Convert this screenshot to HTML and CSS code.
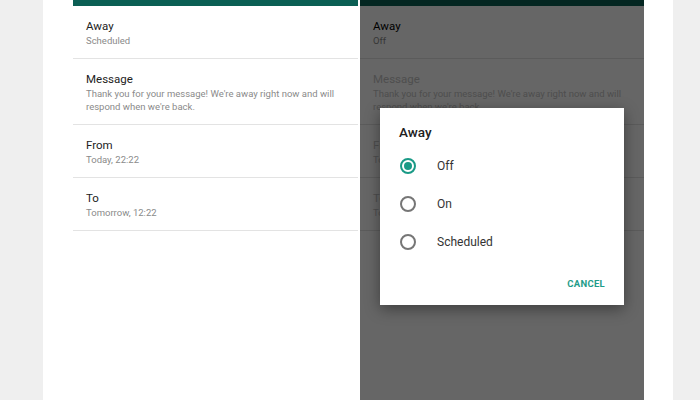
FILE: index.html
```html
<!DOCTYPE html>
<html lang="en">
<head>
    <meta charset="UTF-8">
    <meta name="viewport" content="width=device-width, initial-scale=1.0">
    <title>Away settings</title>
    <link rel="stylesheet" href="styles.css">
</head>
<body>

    <div class="panel">

        <!-- Left phone: settings list -->
        <div class="screen screen-left">
            <div class="appbar"></div>
            <div class="item">
                <div class="item-title">Away</div>
                <div class="item-sub">Scheduled</div>
            </div>
            <div class="item">
                <div class="item-title">Message</div>
                <div class="item-sub">Thank you for your message! We're away right now and will<br>respond when we're back.</div>
            </div>
            <div class="item">
                <div class="item-title">From</div>
                <div class="item-sub">Today, 22:22</div>
            </div>
            <div class="item">
                <div class="item-title">To</div>
                <div class="item-sub">Tomorrow, 12:22</div>
            </div>
        </div>

        <!-- Right phone: same list with dialog open -->
        <div class="screen screen-right">
            <div class="appbar"></div>
            <div class="item">
                <div class="item-title">Away</div>
                <div class="item-sub">Off</div>
            </div>
            <div class="item disabled">
                <div class="item-title">Message</div>
                <div class="item-sub">Thank you for your message! We're away right now and will<br>respond when we're back.</div>
            </div>
            <div class="item disabled">
                <div class="item-title">From</div>
                <div class="item-sub">Today, 22:22</div>
            </div>
            <div class="item disabled">
                <div class="item-title">To</div>
                <div class="item-sub">Tomorrow, 12:22</div>
            </div>

            <div class="scrim"></div>

            <div class="dialog">
                <div class="dialog-title">Away</div>
                <label class="radio-row"><span class="radio checked"></span> Off</label>
                <label class="radio-row"><span class="radio"></span> On</label>
                <label class="radio-row"><span class="radio"></span> Scheduled</label>
                <div class="dialog-actions">
                    <button class="text-btn">CANCEL</button>
                </div>
            </div>
        </div>

    </div>

</body>
</html>
```

FILE: styles.css
```css
body {
    font-family: Roboto, "Noto Sans", Arial, sans-serif;
    background-color: #efefef;
    margin: 0;
    height: 400px;
    overflow: hidden;
}
.panel {
    background: #ffffff;
    margin-left: 43px;
    width: 630px;
    box-sizing: border-box;
    height: 400px;
    padding-left: 30px;
    display: flex;
    gap: 2px;
}
.screen {
    height: 400px;
    position: relative;
    overflow: hidden;
    background: white;
    flex-shrink: 0;
}
.screen-left {
    width: 285px;
}
.screen-right {
    width: 284px;
}
.appbar {
    height: 6px;
    background: #0b5f54;
}
.item {
    padding: 13px 13px 11px 13px;
    border-bottom: 1px solid #e3e3e3;
}
.item-title {
    font-size: 11.5px;
    line-height: 14px;
    color: #222;
}
.item-sub {
    font-size: 9.5px;
    line-height: 13px;
    margin-top: 1px;
    color: #8a8a8a;
}
.screen-right .item-title {
    color: #000;
}
.disabled .item-title,
.disabled .item-sub,
.screen-right .disabled .item-title {
    color: #c4c4c4;
}
.scrim {
    position: absolute;
    top: 0;
    left: 0;
    right: 0;
    bottom: 0;
    background: rgba(0, 0, 0, 0.6);
}
.dialog {
    position: absolute;
    top: 108px;
    left: 20px;
    width: 244px;
    height: 197px;
    box-sizing: border-box;
    background: white;
    padding: 16px 19px 11px 19px;
    box-shadow: 0px 4px 14px rgba(0, 0, 0, 0.4);
}
.dialog-title {
    font-size: 13.5px;
    font-weight: 500;
    line-height: 16px;
    color: #212121;
    margin-bottom: 7px;
}
.radio-row {
    display: flex;
    align-items: center;
    height: 38px;
    font-size: 12px;
    color: #333;
    gap: 21px;
}
.radio {
    width: 16px;
    height: 16px;
    box-sizing: border-box;
    border: 2px solid #767676;
    border-radius: 50%;
    position: relative;
    margin-left: 1px;
}
.radio.checked {
    border-color: #1a9a86;
}
.radio.checked::after {
    content: "";
    position: absolute;
    top: 2px;
    left: 2px;
    width: 8px;
    height: 8px;
    border-radius: 50%;
    background: #1a9a86;
}
.dialog-actions {
    display: flex;
    justify-content: flex-end;
    margin-top: 11px;
}
.text-btn {
    font-family: Roboto, Arial, sans-serif;
    font-size: 9.5px;
    font-weight: 700;
    letter-spacing: 0.3px;
    color: #1f9c89;
    background: none;
    border: none;
    padding: 0;
    height: 22px;
}
```
